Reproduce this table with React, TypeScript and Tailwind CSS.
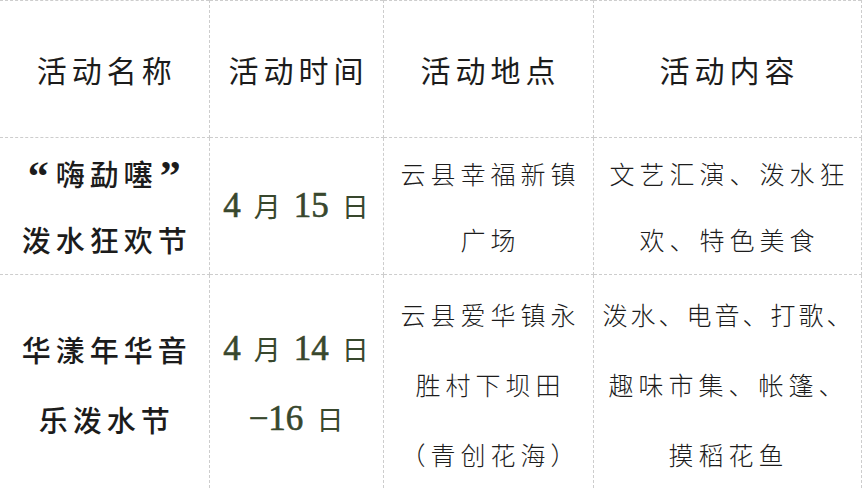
const cjk = '"Noto Sans CJK SC", sans-serif'
const mixed = '"Liberation Serif", "Noto Sans CJK SC", serif'

function Cell({ children, className = "" }: { children: React.ReactNode; className?: string }) {
  return (
    <td className={`border-r border-b border-dashed border-[#cdcdcd] p-0 align-middle text-center ${className}`}>
      {children}
    </td>
  )
}

function Lines({ lines, className = "" }: { lines: string[]; className?: string }) {
  return (
    <div className={`flex flex-col items-center whitespace-nowrap ${className}`}>
      {lines.map((l, i) => (
        <div key={i}>{l}</div>
      ))}
    </div>
  )
}

function DateText({ lines, lead }: { lines: [string, string][][]; lead: string }) {
  return (
    <div className={`flex flex-col items-center whitespace-nowrap text-[#38472d] ${lead}`} style={{ fontFamily: mixed }}>
      {lines.map((parts, i) => (
        <div key={i} className="flex items-baseline gap-[13px]">
          {parts.map(([num, unit], j) => (
            <span key={j} className="flex items-baseline gap-[13px]">
              <span className="text-[35px] [-webkit-text-stroke:0.6px_#38472d]">{num}</span>
              <span className="text-[27px]" style={{ fontFamily: cjk }}>{unit}</span>
            </span>
          ))}
        </div>
      ))}
    </div>
  )
}

export default function App() {
  const head = ["活动名称", "活动时间", "活动地点", "活动内容"]

  return (
    <div className="w-[863px] h-[489px] overflow-hidden bg-white text-[#1c1c1c]" style={{ fontFamily: cjk }}>
      <table className="table-fixed border-collapse border-t border-dashed border-[#cdcdcd]">
        <colgroup>
          <col className="w-[209px]" />
          <col className="w-[174px]" />
          <col className="w-[210px]" />
          <col className="w-[268px]" />
        </colgroup>
        <tbody>
          <tr className="h-[137px]">
            {head.map((h) => (
              <Cell key={h}>
                <div className="text-[30px] tracking-[5px] pl-[5px]">{h}</div>
              </Cell>
            ))}
          </tr>

          <tr className="h-[137px]">
            <Cell>
              <div className="flex flex-col items-center whitespace-nowrap leading-[66px] text-[29px] font-medium">
                <div className="flex items-center gap-[2px]">
                  <span className="text-[42px] font-bold leading-none pt-[6px]" style={{ fontFamily: mixed }}>“</span>
                  <span className="tracking-[5px] pl-[5px]">嗨勐噻</span>
                  <span className="text-[42px] font-bold leading-none pt-[6px]" style={{ fontFamily: mixed }}>”</span>
                </div>
                <div className="tracking-[5px] pl-[5px]">泼水狂欢节</div>
              </div>
            </Cell>
            <Cell>
              <DateText lead="leading-[66px]" lines={[[["4", "月"], ["15", "日"]]]} />
            </Cell>
            <Cell>
              <Lines lines={["云县幸福新镇", "广场"]} className="leading-[66px] text-[25px] tracking-[5px] pl-[5px] font-light" />
            </Cell>
            <Cell>
              <Lines lines={["文艺汇演、泼水狂", "欢、特色美食"]} className="leading-[66px] text-[25px] tracking-[5px] pl-[5px] font-light" />
            </Cell>
          </tr>

          <tr className="h-[218px]">
            <Cell>
              <Lines lines={["华漾年华音", "乐泼水节"]} className="leading-[70px] text-[29px] tracking-[5px] pl-[5px] font-medium" />
            </Cell>
            <Cell>
              <DateText lead="leading-[70px]" lines={[[["4", "月"], ["14", "日"]], [["−16", "日"]]]} />
            </Cell>
            <Cell>
              <Lines lines={["云县爱华镇永", "胜村下坝田", "（青创花海）"]} className="leading-[70px] text-[25px] tracking-[5px] pl-[5px] font-light" />
            </Cell>
            <Cell>
              <div className="flex flex-col items-center leading-[70px] whitespace-nowrap text-[25px] font-light pl-[3px]">
                <div className="tracking-[3px]">泼水、电音、打歌、</div>
                <div className="tracking-[5px]">趣味市集、帐篷、</div>
                <div className="tracking-[5px]">摸稻花鱼</div>
              </div>
            </Cell>
          </tr>
        </tbody>
      </table>
    </div>
  )
}
